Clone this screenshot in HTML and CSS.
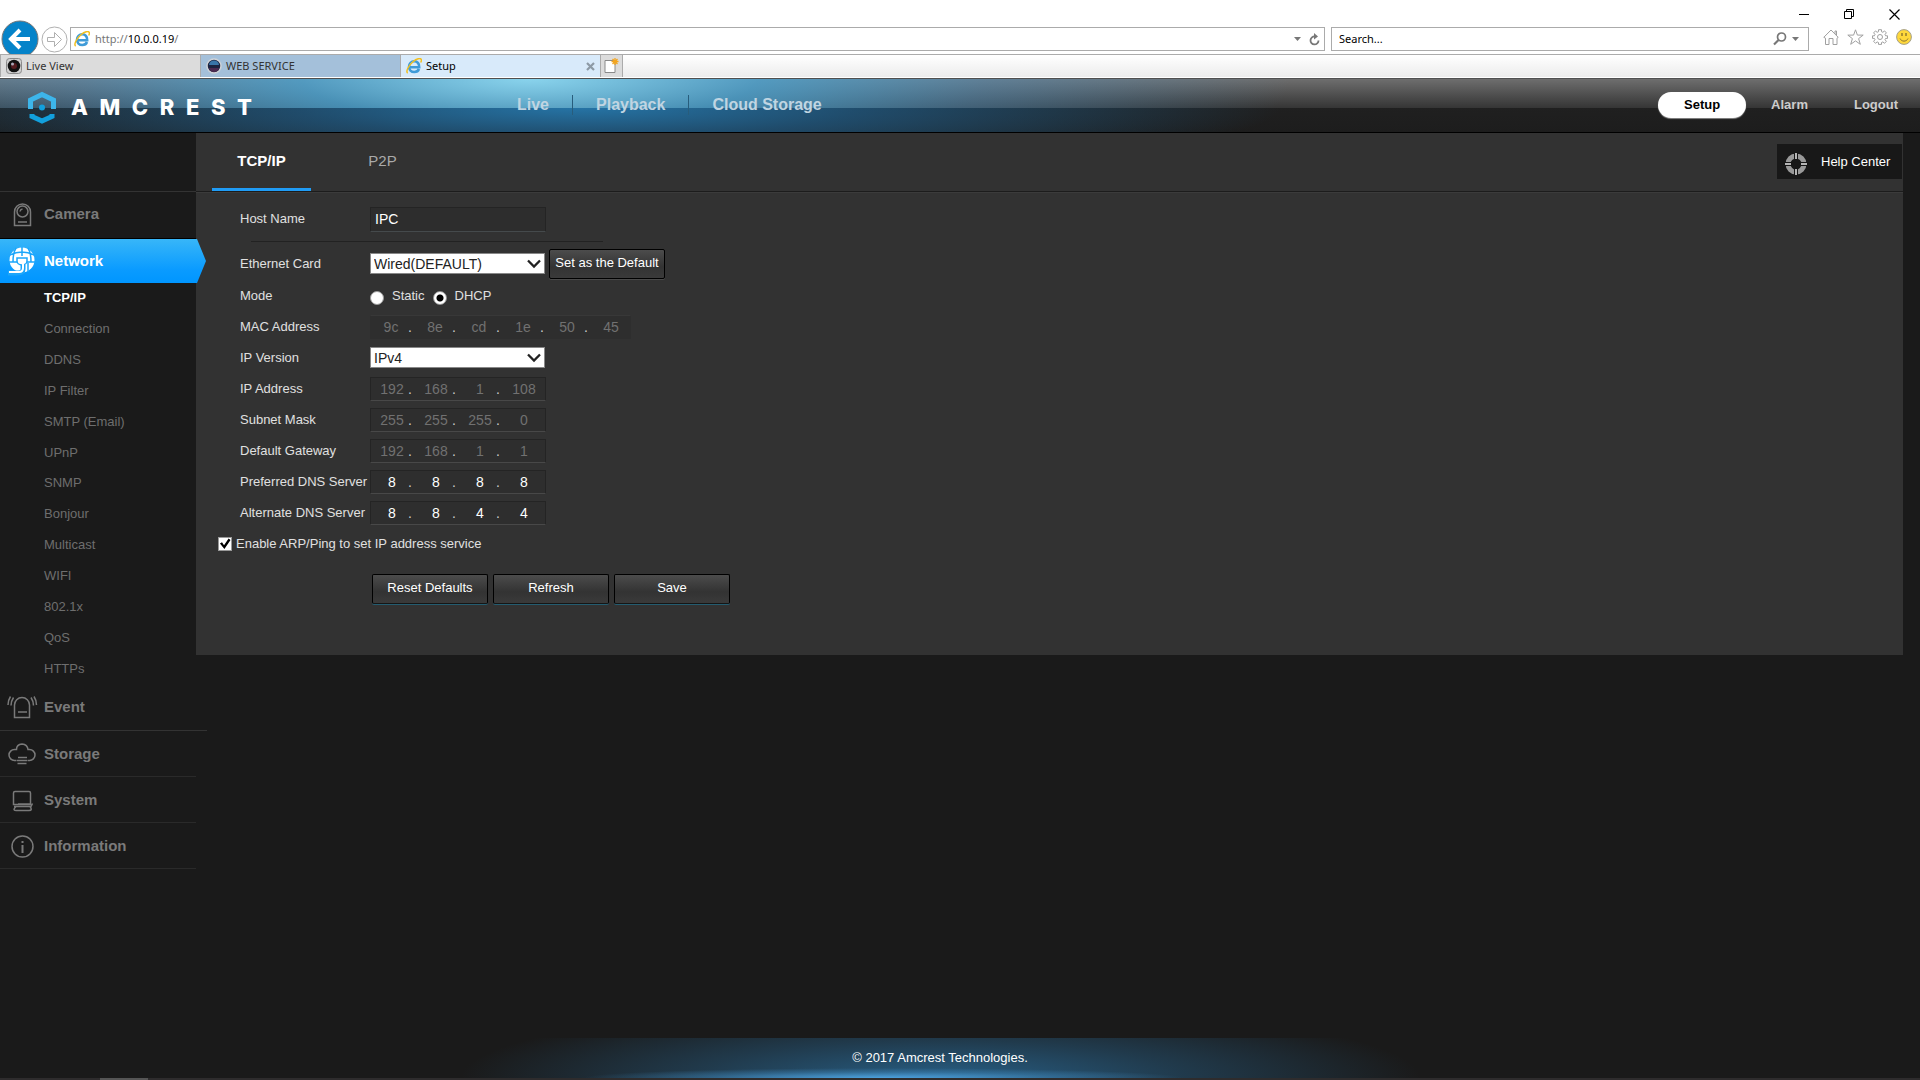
FILE: index.html
```html
<!DOCTYPE html>
<html lang="en">
<head>
<meta charset="utf-8">
<title>Setup</title>
<link rel="stylesheet" href="styles.css">
</head>
<body>
<svg class="defs" aria-hidden="true">
  <symbol id="ie" viewBox="0 0 16 16">
    <path d="M3.6 9.2h9.6C13.4 5.6 11.300 3.300 8.300 3.300S3 5.600 3 8.700s2.200 5.300 5.300 5.300c2.300 0 4-1.100 4.700-3" fill="none" stroke="#3f9bd8" stroke-width="2.600"/>
    <path d="M4 6.500C5 4.600 6.500 3.800 8.300 3.800" fill="none" stroke="#8fd4f5" stroke-width="1"/>
    <path d="M1.700 15.200C-.5 13.500 2.500 7.500 7 3.700 10.500.7 14.600-.3 15.300 1.500c.3.800 0 1.900-.6 3" fill="none" stroke="#f2bf1d" stroke-width="1.500"/>
  </symbol>
</svg>

<header class="browser">
  <div class="titlebar">
    <button type="button" class="plain" aria-label="Minimize"><svg width="11" height="11"><path d="M0 5.500h10" stroke="#000"/></svg></button>
    <button type="button" class="plain" aria-label="Restore"><svg width="11" height="11" fill="none" stroke="#000"><path d="M.5 2.500h7v7h-7zM2.500 2.500v-2h7v7h-2"/></svg></button>
    <button type="button" class="plain" aria-label="Close"><svg width="11" height="11"><path d="M.5.5l10 10M10.500.5l-10 10" stroke="#000" stroke-width="1.200"/></svg></button>
  </div>
  <div class="address-row">
    <button type="button" class="plain back" aria-label="Back"><svg width="38" height="34" viewBox="0 0 38 34"><circle cx="19" cy="19" r="18" fill="#0583c9" stroke="#777"/><path d="M29 19H11M19 10l-9 9 9 9" fill="none" stroke="#fff" stroke-width="4"/></svg></button>
    <button type="button" class="plain forward" aria-label="Forward"><svg width="27" height="27" viewBox="0 0 27 27" fill="none" stroke="#b0b0b0"><circle cx="13.500" cy="13.500" r="12.500"/><path d="M6.500 11.500h7v-5l7 7-7 7v-5h-7z"/></svg></button>
    <div class="box address">
      <svg width="16" height="16"><use href="#ie"/></svg>
      <span class="url">http://<b>10.0.0.19</b>/</span>
      <svg width="8" height="5"><path d="M0 0h7L3.500 4z" fill="#777"/></svg>
      <svg class="reload" width="11" height="13" viewBox="0 0 11 13"><path d="M9.500 7.500A4 4 0 1 1 6 3.500" fill="none" stroke="#777" stroke-width="1.800"/><path d="M5 0l4 3.500-4 3z" fill="#777"/></svg>
    </div>
    <div class="box search">
      <input type="text" value="Search..." aria-label="Search">
      <svg width="14" height="14" viewBox="0 0 14 14" fill="none" stroke="#777"><circle cx="8.500" cy="5" r="4" stroke-width="1.700"/><path d="M5.500 8l-4.500 4.500" stroke-width="2.200"/></svg>
      <svg class="drop" width="8" height="5"><path d="M0 0h7L3.500 4z" fill="#777"/></svg>
    </div>
    <div class="tools">
      <svg width="16" height="16" viewBox="0 0 16 16" fill="none" stroke="#a0a0a0"><path d="M.8 8.300L8 1l7.200 7.300-1.200.9v6.300h-4V9.500H6v6H2.500V9.200zM12 5V2h1.500v4.500"/></svg>
      <svg width="17" height="16" viewBox="0 0 17 16" fill="none" stroke="#a0a0a0"><path d="M8.500.8l1.900 5.300h5.800l-4.600 3.500 1.700 5.700-4.800-3.400-4.800 3.400 1.700-5.700L.8 6.100h5.800z"/></svg>
      <svg width="16" height="16" viewBox="0 0 16 16" fill="none" stroke="#a0a0a0"><circle cx="8" cy="8" r="2.500"/><path d="M6.500.7h3v2l1.400.6 1.600-1.400 1.900 2L13 5.400l.6 1.400h1.900v2.600h-1.900L13 10.700l1.400 1.600-1.900 2-1.600-1.400-1.400.6v1.900h-3v-1.900l-1.400-.6-1.600 1.400-1.900-2L3 10.700l-.6-1.300H.5V6.800h1.900L3 5.400 1.600 3.900l1.900-2 1.600 1.400 1.400-.6z"/></svg>
      <svg width="16" height="16" viewBox="0 0 16 16"><circle cx="8" cy="8" r="7.400" fill="#ffd83b" stroke="#a5a08a"/><path d="M5.500 4v3M6.500 4v3M9.500 4v3M10.500 4v3" stroke="#8a7430" stroke-width=".7"/><path d="M4 9.500c1.500 3.500 6.500 3.500 8 0" fill="none" stroke="#8a7430"/></svg>
    </div>
  </div>
  <div class="tabs">
    <a href="#" class="tab"><svg width="16" height="16" viewBox="0 0 16 16"><rect x=".5" y=".5" width="15" height="15" rx="3" fill="#d0d0d0" stroke="#8a8a8a"/><circle cx="8" cy="8" r="6.300" fill="#111"/><circle cx="8" cy="8" r="3" fill="#551c20"/><circle cx="6.500" cy="6" r="1.500" fill="#aab"/></svg>Live View</a>
    <a href="#" class="tab service"><svg width="16" height="16" viewBox="0 0 16 16"><circle cx="8" cy="8" r="7" fill="#1c2340" stroke="#cfd3d8" stroke-width="1.500"/><path d="M3 7a5 4.500 0 0 1 10 0z" fill="#3975a8"/><path d="M3 10a5 4 0 0 0 10 0z" fill="#4c2a50"/></svg>WEB SERVICE</a>
    <a href="#" class="tab current"><svg width="16" height="16"><use href="#ie"/></svg>Setup<svg class="close" width="9" height="9"><path d="M1 1l7 7M8 1L1 8" stroke="#8d9aa5" stroke-width="2.200"/></svg></a>
    <button type="button" class="plain new-tab" aria-label="New tab"><svg width="15" height="16" viewBox="0 0 15 16"><path d="M1 2.500h10v12H1z" fill="#fff" stroke="#8a8a8a"/><path d="M11 0v7M7.500 3.500h7M8.500 1l5 5M13.500 1l-5 5" stroke="#f3a51f" stroke-width="1.300"/></svg></button>
  </div>
</header>

<header class="site-header">
  <a class="logo" href="#" aria-label="AMCREST">
    <svg width="32" height="34" viewBox="0 0 32 34"><g fill="none" stroke-width="5"><path d="M4.500 19V10L16 4.500 27.500 10v9" stroke="#3db5ea"/><path d="M6 24v2.500L16 31l10-4.500V24" stroke="#12a0dd"/></g><circle cx="16" cy="17.500" r="3" fill="#12a0dd"/></svg>
    <span class="wordmark"><span>A</span><span>M</span><span>C</span><span>R</span><span>E</span><span>S</span><span>T</span></span>
  </a>
  <nav class="main-nav">
    <a href="#">Live</a>
    <a href="#">Playback</a>
    <a href="#">Cloud Storage</a>
  </nav>
  <nav class="user-nav">
    <a href="#" class="active">Setup</a>
    <a href="#">Alarm</a>
    <a href="#">Logout</a>
  </nav>
</header>

<div class="page">
  <nav class="sidebar">
    <a href="#" class="group camera"><svg width="36" height="36" viewBox="0 0 36 36"><path d="M10.500 29.500V16a8 8 0 0 1 16 0v13.500z"/><circle cx="18.500" cy="15.500" r="5.500"/><path d="M16 15.500a3 3 0 0 1 2.500-2.500M14 26h9"/></svg>Camera</a>
    <a href="#" class="group network"><svg width="36" height="36" viewBox="0 0 36 36"><circle cx="18" cy="17" r="12.500" fill="#fff" stroke="none"/><g stroke="#1ba6fb" stroke-width="1.500"><path d="M6 12c8-4 16-4 24 0M18 4v9M12 5c-2 3-3 6-3 14M24 5c2 3 3 6 3 14M5 19h8M23 19h8M24 20v9"/><path d="M13 15v3c0 2 2 4 5 4s5-2 5-4v-3z" fill="#fff"/><path d="M19 22v4q0 4-6 4H4" stroke-width="5"/></g><path d="M19 20v5q0 4-4 4H5" stroke="#fff" stroke-width="2"/></svg>Network</a>
    <ul class="sub">
      <li><a href="#" class="active">TCP/IP</a></li>
      <li><a href="#">Connection</a></li>
      <li><a href="#">DDNS</a></li>
      <li><a href="#">IP Filter</a></li>
      <li><a href="#">SMTP (Email)</a></li>
      <li><a href="#">UPnP</a></li>
      <li><a href="#">SNMP</a></li>
      <li><a href="#">Bonjour</a></li>
      <li><a href="#">Multicast</a></li>
      <li><a href="#">WIFI</a></li>
      <li><a href="#">802.1x</a></li>
      <li><a href="#">QoS</a></li>
      <li><a href="#">HTTPs</a></li>
    </ul>
    <a href="#" class="group event"><svg width="36" height="36" viewBox="0 0 36 36"><path d="M10.500 28.500V16a7.500 7.500 0 0 1 15 0v12.500zM14 23h9M9.500 8.500c-2 3-2.500 5-2.500 8M6.500 7.500c-2 3-2.500 5-2.500 8.500M27 8.500c2 3 2.500 5 2.500 8M30 7.500c2 3 2.500 5 2.500 8.500"/></svg>Event</a>
    <a href="#" class="group"><svg width="36" height="36" viewBox="0 0 36 36"><path d="M12 24.500h-1.500a5 5 0 0 1 0-11H12.500q0-5 5.500-5.500 5.500.5 6 5.500h1.500a5 5 0 0 1 0 11H24M14 21.500h9M12.500 24.500h11M13.500 27.500h9"/></svg>Storage</a>
    <a href="#" class="group"><svg width="36" height="36" viewBox="0 0 36 36"><path d="M11 9.500h14q1.500 0 1.500 1.500v11.500h-17V11q0-1.500 1.500-1.500zM14 22h12M10 24.500h17l1.500-3M12 24.500q-4 4 0 4h13q4 0 1-4"/></svg>System</a>
    <a href="#" class="group"><svg width="36" height="36" viewBox="0 0 36 36"><circle cx="18.500" cy="18.500" r="10.500"/><path d="M18.500 17v8M18.500 13v2" stroke-width="2"/></svg>Information</a>
  </nav>

  <main class="panel">
    <div class="panel-head">
      <a href="#" class="page-tab active">TCP/IP</a>
      <a href="#" class="page-tab">P2P</a>
      <a href="#" class="help"><svg width="24" height="24" viewBox="0 0 24 24"><circle cx="12" cy="12" r="8" fill="none" stroke="#999" stroke-width="5"/><path d="M12 0v8M12 16v8M0 12h8M16 12h8" stroke="#161616" stroke-width="4"/><path d="M12 1v6M12 17v6M1 12h6M17 12h6" stroke="#b5b5b5" stroke-width="2"/></svg><span>Help Center</span></a>
    </div>
    <form class="settings">
      <div class="row host"><label for="host">Host Name</label><input class="text" id="host" type="text" value="IPC"></div>
      <hr>
      <div class="row card"><label for="card">Ethernet Card</label>
        <span class="select"><select id="card"><option>Wired(DEFAULT)</option></select><svg width="14" height="10" viewBox="0 0 14 10"><path d="M1 1.500l6 6 6-6" fill="none" stroke="#222" stroke-width="2.300"/></svg></span>
        <button type="button" class="btn">Set as the Default</button></div>
      <div class="row mode"><span>Mode</span>
        <span class="radios"><input type="radio" name="mode" id="static"><label for="static">Static</label><input type="radio" name="mode" id="dhcp" checked><label for="dhcp">DHCP</label></span></div>
      <div class="row"><span>MAC Address</span>
        <span class="octets mac"><input disabled aria-label="MAC 1" value="9c"><i>.</i><input disabled aria-label="MAC 2" value="8e"><i>.</i><input disabled aria-label="MAC 3" value="cd"><i>.</i><input disabled aria-label="MAC 4" value="1e"><i>.</i><input disabled aria-label="MAC 5" value="50"><i>.</i><input disabled aria-label="MAC 6" value="45"></span></div>
      <div class="row"><label for="ipv">IP Version</label>
        <span class="select"><select id="ipv"><option>IPv4</option></select><svg width="14" height="10" viewBox="0 0 14 10"><path d="M1 1.500l6 6 6-6" fill="none" stroke="#222" stroke-width="2.300"/></svg></span></div>
      <div class="row"><span>IP Address</span>
        <span class="octets"><input disabled aria-label="IP 1" value="192"><i>.</i><input disabled aria-label="IP 2" value="168"><i>.</i><input disabled aria-label="IP 3" value="1"><i>.</i><input disabled aria-label="IP 4" value="108"></span></div>
      <div class="row"><span>Subnet Mask</span>
        <span class="octets"><input disabled aria-label="Mask 1" value="255"><i>.</i><input disabled aria-label="Mask 2" value="255"><i>.</i><input disabled aria-label="Mask 3" value="255"><i>.</i><input disabled aria-label="Mask 4" value="0"></span></div>
      <div class="row"><span>Default Gateway</span>
        <span class="octets"><input disabled aria-label="Gateway 1" value="192"><i>.</i><input disabled aria-label="Gateway 2" value="168"><i>.</i><input disabled aria-label="Gateway 3" value="1"><i>.</i><input disabled aria-label="Gateway 4" value="1"></span></div>
      <div class="row"><span>Preferred DNS Server</span>
        <span class="octets"><input aria-label="Preferred DNS 1" value="8"><i>.</i><input aria-label="Preferred DNS 2" value="8"><i>.</i><input aria-label="Preferred DNS 3" value="8"><i>.</i><input aria-label="Preferred DNS 4" value="8"></span></div>
      <div class="row"><span>Alternate DNS Server</span>
        <span class="octets"><input aria-label="Alternate DNS 1" value="8"><i>.</i><input aria-label="Alternate DNS 2" value="8"><i>.</i><input aria-label="Alternate DNS 3" value="4"><i>.</i><input aria-label="Alternate DNS 4" value="4"></span></div>
      <div class="check-row"><input type="checkbox" id="arp" checked><label for="arp">Enable ARP/Ping to set IP address service</label></div>
      <div class="actions">
        <button type="button" class="btn">Reset Defaults</button>
        <button type="button" class="btn">Refresh</button>
        <button type="button" class="btn">Save</button>
      </div>
    </form>
  </main>
</div>

<footer class="footer">© 2017 Amcrest Technologies.</footer>
<div class="taskbar"><span></span></div>
</body>
</html>
```
FILE: styles.css
```css
* { box-sizing: border-box; }
body {
  margin: 0;
  min-height: 100vh;
  display: flex;
  flex-direction: column;
  background: #1a1a1a;
  color: #e0e0e0;
  font: 13px/16px "Liberation Sans", Arial, sans-serif;
}
a { color: inherit; text-decoration: none; }
input, select, button { font: inherit; color: inherit; margin: 0; }
svg { flex: none; display: block; }
.defs { position: absolute; width: 0; height: 0; }
.plain { border: 0; padding: 0; background: none; }

/* Browser window */
.browser { background: #fff; color: #333; font: 11px/16px "Noto Sans", sans-serif; }
.titlebar { display: flex; justify-content: flex-end; gap: 34px; height: 20px; padding: 9px 20px 0 0; }
.address-row { display: flex; align-items: center; height: 34px; padding-right: 8px; }
.back { padding-left: 1px; height: 34px; overflow: hidden; }
.forward { margin: 4px 2px 0; }
.box { display: flex; align-items: center; height: 24px; margin-top: 4px; border: 1px solid #ababab; background: #fff; }
.address { flex: 1; padding: 0 4px 0 3px; }
.url { flex: 1; margin-left: 5px; color: #777; }
.url b { font-weight: 400; color: #000; }
.reload { margin-left: 7px; }
.search { width: 478px; margin-left: 6px; padding: 0 8px 0 7px; color: #000; }
.search input { flex: 1; min-width: 0; border: 0; padding: 0; background: none; }
.drop { margin-left: 5px; }
.tools { display: flex; gap: 8px; padding-left: 14px; }
.tabs { display: flex; height: 24px; border-top: 1px solid #ababab; border-bottom: 1px solid #fff; background: linear-gradient(#fff, #ececec); }
.tab { display: flex; align-items: center; width: 200px; padding: 0 5px; gap: 4px; border-left: 1px solid #ababab; background: #dcdcdc; }
.service { background: #a4c0da; }
.current { background: #d8eafa; color: #000; }
.close { margin-left: auto; }
.new-tab { width: 23px; border: solid #ababab; border-width: 0 1px; background: #dcdcdc; padding-left: 3px; }

/* Site header */
.site-header {
  display: flex;
  align-items: center;
  height: 55px;
  padding: 0 22px 2px 26px;
  border-top: 1px solid #505050;
  border-bottom: 1px solid #000;
  background:
    radial-gradient(ellipse 760px 150px at 530px 0, rgba(140, 222, 250, .9), rgba(75, 170, 220, .75) 30%, rgba(80, 150, 200, .45) 60%, rgba(80, 130, 175, 0)) 0 0 / 100% 29px no-repeat,
    radial-gradient(ellipse 700px 70px at 580px 0, rgba(38, 120, 172, .95), rgba(32, 95, 140, .7) 40%, rgba(30, 60, 90, 0)) 0 29px / 100% 25px no-repeat,
    linear-gradient(#6e6e6e, #353535) 0 0 / 100% 29px no-repeat,
    linear-gradient(#232323, #1d1d1d);
}
.logo { display: flex; align-items: center; gap: 13px; width: 491px; margin-top: 4px; color: #fff; }
.wordmark { display: flex; justify-content: space-between; width: 181px; font: 800 22px/26px Inter, sans-serif; }
.main-nav { display: flex; font: bold 16px/20px "Liberation Sans", Arial, sans-serif; color: #c0d5e2; }
.main-nav a + a { margin-left: 23px; padding-left: 23px; border-left: 1px solid #285d7c; }
.user-nav { display: flex; align-items: center; gap: 46px; margin-left: auto; font-weight: bold; color: #ccc; }
.user-nav .active { width: 88px; margin-right: -21px; text-align: center; line-height: 26px; border-radius: 13px; background: #fff; color: #000; box-shadow: 0 1px 1px #888; }

/* Sidebar */
.page { flex: 1; display: flex; align-items: flex-start; padding-right: 17px; }
.sidebar { flex: none; width: 196px; }
.group { display: flex; align-items: center; height: 46px; padding-left: 4px; gap: 4px; border-bottom: 1px solid #2a2a2a; color: #7a7a7a; font-size: 15px; font-weight: bold; }
.group svg { fill: none; stroke: currentColor; stroke-width: 1.500; }
.camera { height: 48px; margin-top: 58px; padding-bottom: 2px; border-top: 1px solid #333; border-bottom-color: #000; }
.network {
  position: relative;
  z-index: 1;
  height: 44px;
  margin-right: -10px;
  border: 0;
  background: linear-gradient(#38b6f8, #0a9bff 70%, #0096ff);
  color: #fff;
  clip-path: polygon(0 0, 197px 0, 100% 50%, 197px 100%, 0 100%);
}
.sub { display: grid; grid-auto-rows: 1fr; height: 401px; margin: 0; padding: 0 0 0 44px; list-style: none; align-items: center; color: #6e6e6e; }
.sub .active { color: #fff; font-weight: bold; }
.event { height: 47px; margin-right: -11px; border-color: #333; }

/* Content panel */
.panel { flex: 1; min-width: 0; background: #323232; }
.panel-head { display: flex; height: 59px; padding-left: 16px; border-bottom: 1px solid #1c1c1c; box-shadow: 0 1px #3b3b3b; }
.page-tab { width: 99px; margin-right: 22px; padding: 20px 0; text-align: center; font-size: 15px; color: #aaa; border-bottom: 3px solid transparent; }
.page-tab.active { color: #fff; font-weight: bold; border-color: #209cf5; }
.help { display: flex; align-items: center; gap: 13px; width: 125px; height: 35px; margin: 11px 1px 0 auto; padding-left: 7px; background: #181818; color: #fff; }
.help svg { margin-top: 4px; }
.settings { padding: 12px 0 51px 22px; }
.row { display: grid; grid-template-columns: 130px auto auto; justify-content: start; align-items: center; height: 31px; padding-left: 22px; }
.host { height: 30px; margin-bottom: 7px; }
hr { width: 352px; height: 1px; margin: 0 0 4px 33px; border: 0; background: #222; }
.card { height: 35px; column-gap: 4px; grid-template-columns: 126px auto auto; }
.mode { height: 30px; }
.text { width: 176px; height: 25px; padding: 0 4px; border: 1px solid #242424; border-bottom-color: #454a4c; background: #2d2d2d; color: #fff; font-size: 14px; }
.select { display: grid; align-items: center; }
.select select, .select svg { grid-area: 1 / 1; }
.select select { appearance: none; width: 175px; height: 21px; padding: 0 3px; border: 1px solid #888; border-radius: 0; background: #fff; color: #222; font-size: 14px; line-height: 18px; }
.select svg { justify-self: end; margin-right: 4px; pointer-events: none; }
.btn { height: 30px; width: 116px; padding: 0 0 2px; border: 1px solid #000; border-radius: 2px; background: linear-gradient(#4c4c4c, #333 60%, #3a3a3a); box-shadow: 0 1px #4a4a4a; color: #fff; }
.radios { display: flex; align-items: center; }
.radios input { appearance: none; width: 14px; height: 14px; margin-top: 4px; border: 1px solid #999; border-radius: 7px; background: #fff; }
.radios input:checked { background: radial-gradient(circle, #000 3px, #fff 4px); }
.radios label { padding: 0 8px; }
.octets { display: flex; align-items: center; width: 176px; height: 24px; padding-left: 5px; border: 1px solid #242424; border-bottom-color: #484848; background: #2e2e2e; font-size: 14px; }
.octets input { width: 32px; padding: 0; border: 0; background: none; text-align: center; color: #fff; }
.octets input:disabled { color: #717171; }
.octets i { width: 12px; font-style: normal; color: #ccc; }
.mac { width: 261px; padding-left: 4px; border-color: #383838 transparent transparent; }
.mac i { padding-left: 1px; }
.check-row { display: flex; align-items: center; gap: 4px; height: 31px; }
.check-row input { appearance: none; display: grid; width: 14px; height: 14px; border: 1px solid #999; background: #fff; }
.check-row input:checked::before { content: ""; background: #000; clip-path: polygon(8% 50%, 25% 40%, 42% 65%, 80% 8%, 96% 20%, 45% 96%); }
.actions { display: flex; gap: 5px; margin-top: 15px; padding-left: 154px; }
.actions .btn { border-bottom-color: #151515; box-shadow: 0 1px #245c70; }

/* Footer */
.footer {
  height: 40px;
  padding: 12px 40px 0 0;
  text-align: center;
  color: #fff;
  background:
    radial-gradient(ellipse 300px 10px at 46% 100%, #4da2de, rgba(60, 130, 180, .5) 60%, rgba(40, 90, 130, 0)),
    radial-gradient(ellipse 480px 75px at 49% 100%, rgba(40, 98, 138, .95), rgba(36, 76, 104, .65) 50%, rgba(26, 26, 26, 0));
}
.taskbar { height: 2px; background: #2e2c2d; }
.taskbar span { display: block; width: 48px; height: 2px; margin-left: 100px; background: #555; }
```
